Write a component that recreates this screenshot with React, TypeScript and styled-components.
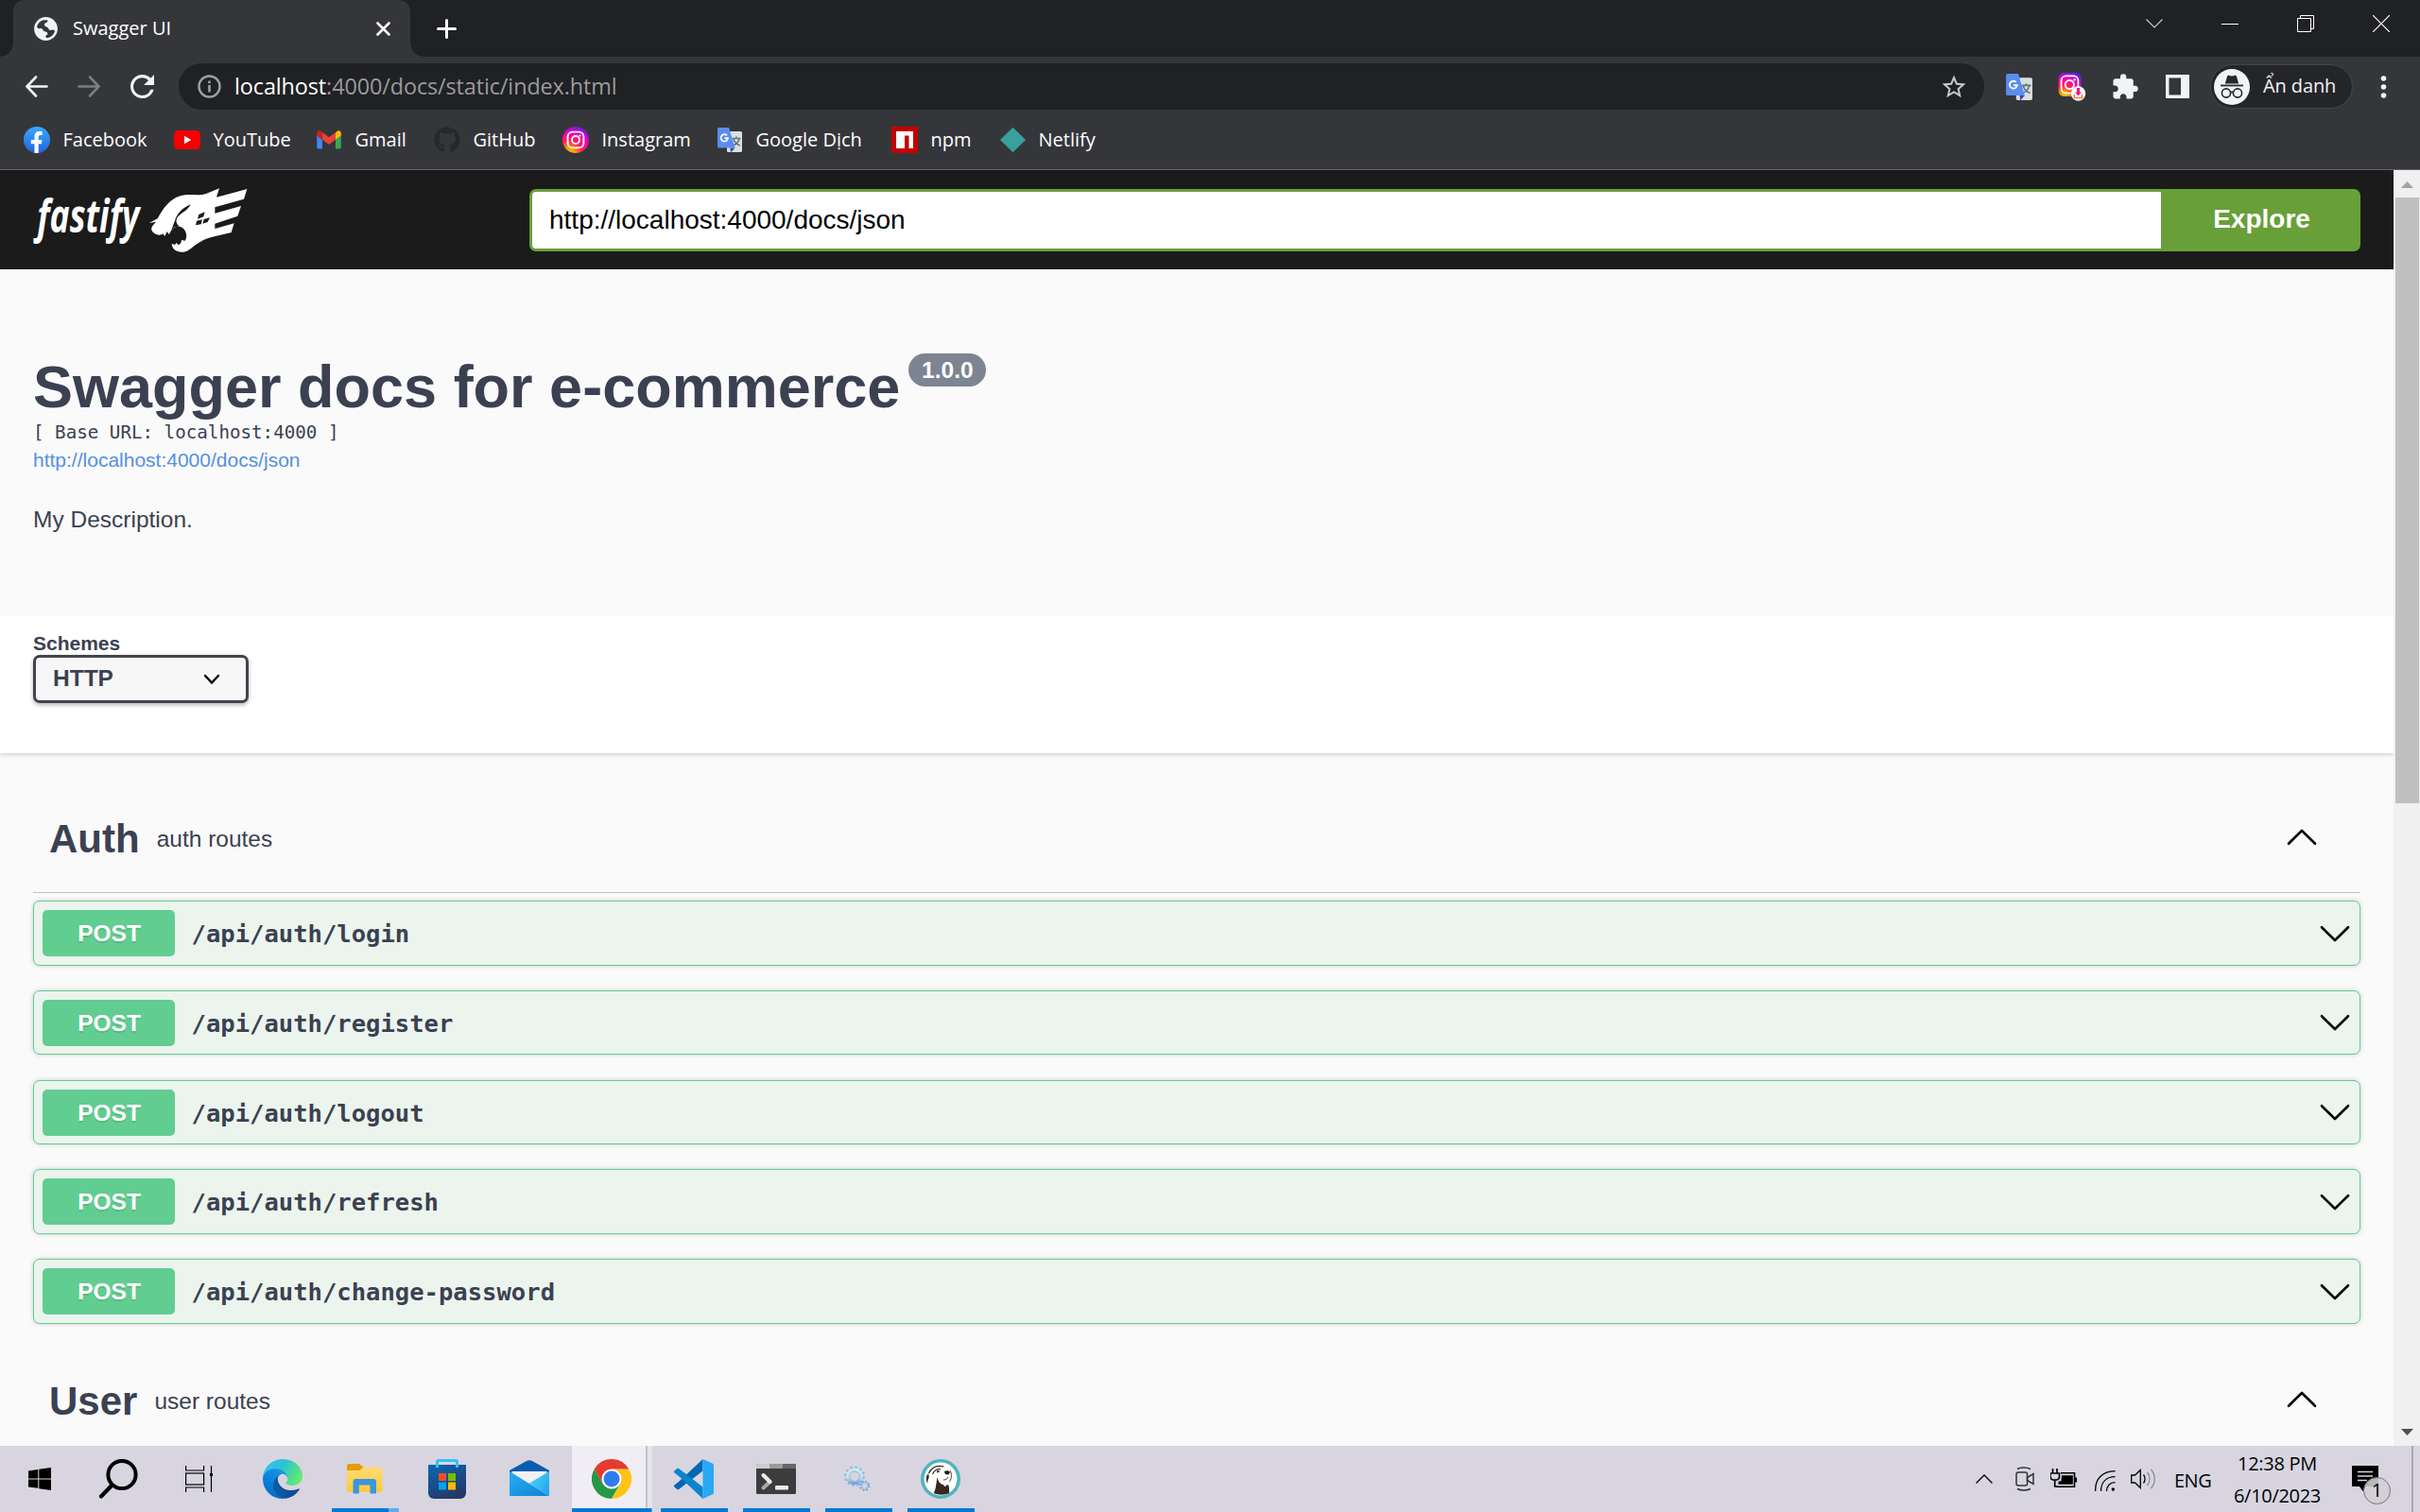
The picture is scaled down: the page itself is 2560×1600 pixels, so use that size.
import React from "react";
import styled, { createGlobalStyle } from "styled-components";
import { FaGithub } from "react-icons/fa";
import { MdExtension, MdStarBorder, MdRefresh } from "react-icons/md";

const GlobalStyle = createGlobalStyle`
  *, *::before, *::after { box-sizing: border-box; }
  html, body { margin: 0; padding: 0; }
  body { width: 2560px; height: 1600px; overflow: hidden; background: #fafafa; }
  svg { display: block; flex: none; }
`;

const UI = `"Open Sans", "Noto Sans", sans-serif`;
const SANS = `"Liberation Sans", Arial, sans-serif`;
const MONO = `"DejaVu Sans Mono", "Liberation Mono", monospace`;

const Screen = styled.div`
  width: 2560px;
  height: 1600px;
  display: flex;
  flex-direction: column;
  overflow: hidden;
`;

/* ---------- browser chrome ---------- */

const TabStrip = styled.div`
  height: 60px;
  flex: none;
  background: #202124;
  display: flex;
  padding-left: 14px;
`;

const Tab = styled.div`
  position: relative;
  width: 420px;
  height: 60px;
  background: #35363a;
  border-radius: 12px 12px 0 0;
  display: flex;
  align-items: center;
  padding: 0 21px 0 22px;
  &::before, &::after {
    content: "";
    position: absolute;
    bottom: 0;
    width: 14px;
    height: 14px;
  }
  &::before { left: -14px; background: radial-gradient(circle at 0 0, transparent 13.5px, #35363a 14px); }
  &::after { right: -14px; background: radial-gradient(circle at 100% 0, transparent 13.5px, #35363a 14px); }
`;

const TabTitle = styled.span`
  flex: 1;
  margin-left: 16px;
  padding-bottom: 0;
  font: 400 20px/28px ${UI};
  color: #fff;
`;

const NewTab = styled.div`
  margin-left: 28px;
  display: flex;
  align-items: center;
`;

const WindowControls = styled.div`
  margin-left: auto;
  margin-top: 16px;
  height: 19px;
  display: flex;
  gap: 62px;
  padding-right: 32px;
`;

const Toolbar = styled.div`
  height: 60px;
  flex: none;
  background: #35363a;
  display: flex;
  align-items: center;
  padding: 3px 29px 0 26px;
`;

const NavButtons = styled.div`
  display: flex;
  gap: 31px;
  width: 163px;
  margin-top: -1px;
  align-items: center;
`;

const Omnibox = styled.div`
  width: 1910px;
  height: 49px;
  border-radius: 25px;
  background: #202124;
  display: flex;
  align-items: center;
  padding: 0 17px 0 20px;
`;

const Url = styled.span`
  flex: 1;
  margin-left: 14px;
  padding-bottom: 2px;
  font: 400 23.4px/32px ${UI};
  letter-spacing: -0.1px;
  color: #9a9b9d;
  b { font-weight: 400; color: #fff; }
`;

const Extensions = styled.div`
  display: flex;
  align-items: center;
  gap: 26px;
  margin-left: 22px;
  width: 217px;
  svg:last-child { margin-left: 2px; }
`;

const Incognito = styled.div`
  width: 151px;
  height: 47px;
  margin-right: 28px;
  border: 1.5px solid #45464a;
  border-radius: 24px;
  background: #242529;
  display: flex;
  align-items: center;
  padding: 0 0 0 3px;
  font: 400 20px/28px ${UI};
  letter-spacing: -0.1px;
  color: #f1f3f4;
  span { margin-left: 14px; padding-bottom: 2px; white-space: nowrap; }
`;

const Bookmarks = styled.div`
  height: 60px;
  flex: none;
  background: #35363a;
  border-bottom: 1px solid #626366;
  display: flex;
  align-items: flex-start;
  padding: 14px 0 0 25px;
`;

const Bookmark = styled.div<{ $w: number }>`
  width: ${(p) => p.$w}px;
  height: 28px;
  display: flex;
  align-items: center;
  font: 400 20px/28px ${UI};
  color: #fff;
  white-space: nowrap;
  span { margin-left: 13.5px; }
`;

/* ---------- swagger page ---------- */

const Viewport = styled.div`
  height: 1350px;
  flex: none;
  display: flex;
  overflow: hidden;
`;

const Page = styled.main`
  width: 2532px;
  height: 1350px;
  overflow: hidden;
  background: #fafafa;
  color: #3b4151;
  font-family: ${SANS};
`;

const TopBar = styled.header`
  height: 105px;
  background: #1b1b1b;
  display: flex;
  align-items: flex-start;
  padding-left: 30px;
`;

const SearchForm = styled.div`
  display: flex;
  margin: 20px 0 0 290px;
  height: 66px;
`;

const SpecInput = styled.div`
  width: 1726px;
  border: 3px solid #689f38;
  border-right: 0;
  border-radius: 7px 0 0 7px;
  background: #fff;
  padding: 0 16px 1px 18px;
  font: 400 28px/60px ${SANS};
  color: #000;
`;

const ExploreButton = styled.div`
  width: 211px;
  border-radius: 0 7px 7px 0;
  background: #689f38;
  text-align: center;
  padding-left: 2px;
  font: 700 28px/63px ${SANS};
  color: #fff;
`;

const Info = styled.section`
  height: 366px;
  padding: 88px 35px 0;
`;

const TitleRow = styled.div`
  height: 72px;
  display: flex;
  align-items: flex-start;
`;

const Title = styled.h2`
  margin: 0;
  font: 700 63px/72px ${SANS};
  white-space: nowrap;
`;

const Version = styled.span`
  margin: 1px 0 0 9px;
  width: 82px;
  height: 35px;
  border-radius: 18px;
  background: #7d8492;
  color: #fff;
  font: 700 24.5px/35px ${SANS};
  text-align: center;
`;

const BaseUrl = styled.pre`
  margin: 0;
  font: 400 19.2px/26px ${MONO};
  height: 25px;
`;

const SpecLink = styled.a`
  display: block;
  font: 400 21px/33px ${SANS};
  color: #5590e0;
`;

const Description = styled.p`
  margin: 33px 0 0;
  font: 400 24.5px/28px ${SANS};
`;

const SchemeSection = styled.section`
  position: relative;
  height: 146px;
  background: #fff;
  box-shadow: 0 2px 4px rgba(0, 0, 0, 0.15);
  padding: 18px 35px 0;
`;

const SchemeLabel = styled.div`
  font: 700 21px/24px ${SANS};
`;

const Select = styled.div`
  width: 228px;
  height: 51px;
  border: 3px solid #41444e;
  border-radius: 7px;
  background: #f7f7f7;
  box-shadow: 0 2px 4px rgba(0, 0, 0, 0.3);
  display: flex;
  justify-content: space-between;
  align-items: center;
  padding: 0 27px 0 18px;
  font: 700 24.5px/43px ${SANS};
  span { padding-bottom: 2px; }
`;

const Tags = styled.section`
  padding: 33px 35px 0;
`;

const TagHeader = styled.div`
  height: 115px;
  border-bottom: 1px solid #c1c3c8;
  display: flex;
  align-items: center;
  padding: 2px 46px 0 17px;
  h3 { margin: 0; font: 700 42px/50px ${SANS}; }
  p { margin: 0 auto 0 18px; font: 400 24.5px/30px ${SANS}; }
  svg { margin-bottom: 4px; }
`;

const Operations = styled.div`
  display: flex;
  flex-direction: column;
  gap: 26.25px;
  padding: 8px 0 24.5px;
`;

const OpBlock = styled.div`
  height: 68.5px;
  border: 1px solid #61cd90;
  border-radius: 7px;
  background: #ebf5ee;
  box-shadow: 0 0 5px rgba(0, 0, 0, 0.19);
  display: flex;
  align-items: center;
  padding: 0.5px 10px 0 9px;
`;

const Method = styled.span`
  width: 140px;
  height: 49px;
  border-radius: 5px;
  background: #61cd90;
  color: #fff;
  text-align: center;
  text-shadow: 0 2px 0 rgba(0, 0, 0, 0.1);
  padding-left: 1px;
  font: 700 24.5px/49px ${SANS};
`;

const Path = styled.span`
  flex: 1;
  margin-left: 17.5px;
  padding-top: 1px;
  font: 700 25.55px/48px ${MONO};
`;

const Scrollbar = styled.div`
  width: 28px;
  background: #f0f0f0;
  display: flex;
  flex-direction: column;
  align-items: center;
  padding: 12px 0 11px;
`;

const Thumb = styled.div`
  width: 25px;
  height: 641px;
  margin: 10px 0 auto 1px;
  background: #c0c0c0;
`;

/* ---------- taskbar ---------- */

const Taskbar = styled.footer`
  height: 70px;
  flex: none;
  background: #d8d5e1;
  display: flex;
`;

const SystemButtons = styled.div`
  width: 264px;
  display: flex;
  align-items: flex-start;
  padding-left: 30px;
`;

const Spaced = styled.div<{ $l?: number; $t?: number }>`
  margin-left: ${(p) => p.$l ?? 0}px;
  margin-top: ${(p) => p.$t ?? 0}px;
`;

const AppSlot = styled.div<{ $running?: boolean; $active?: boolean; $stack?: boolean }>`
  width: ${(p) => (p.$active ? 85 : 71)}px;
  height: 70px;
  margin-right: ${(p) => (p.$active ? 9 : 16)}px;
  margin-left: ${(p) => (p.$active ? -7 : 0)}px;
  padding: 14px 0 0 ${(p) => (p.$active ? 21 : 14)}px;
  border-bottom: 4px solid ${(p) => (p.$running ? "#0078d7" : "transparent")};
  background: ${(p) =>
    p.$active
      ? "linear-gradient(90deg, #f0eef4 0 78px, #c4c1cb 78px 80px, #e5e3eb 80px)"
      : "transparent"};
  ${(p) =>
    p.$stack &&
    `border-image: linear-gradient(90deg, #0078d7 ${p.$active ? 94 : 80}%, #62acea ${p.$active ? 94 : 80}%) 4;`}
`;

const Tray = styled.div`
  margin-left: auto;
  display: flex;
  align-items: flex-start;
  font: 400 20px/34px ${UI};
  color: #000;
`;

const Lang = styled.span`
  margin: 20px 0 0 19px;
  width: 61px;
  letter-spacing: -0.5px;
`;

const Clock = styled.div`
  width: 96px;
  margin-top: 2px;
  text-align: center;
  letter-spacing: -0.3px;
  white-space: nowrap;
`;

const Notifications = styled.div`
  position: relative;
  margin: 21px 0 0 31px;
  width: 63px;
  height: 49px;
`;

const Count = styled.span`
  position: absolute;
  left: 12px;
  top: 12px;
  width: 29px;
  height: 29px;
  border: 1px solid #77757c;
  border-radius: 50%;
  background: rgba(208, 207, 210, 0.88);
  text-align: center;
  font: 400 20px/26px ${UI};
`;

const PeekEdge = styled.div`
  width: 9px;
  height: 70px;
  border-left: 2px solid #aaa8b4;
`;

/* ---------- icons ---------- */

const GlobeIcon = () => (
  <svg width="25" height="25" viewBox="0 0 25 25">
    <circle cx="12.5" cy="12.5" r="12.4" fill="#f1f3f4" />
    <path
      d="M3 10.2C4 6.500 7 3.800 10.500 3.200L14.200 3.300 14.300 5.300 11 7 11.200 9.200 14.600 11.300 16.500 14 20.800 13.500 22 15C20.800 19 17.500 21.800 13.500 22.200L12 20.300 14.500 18.300 13.800 16.200 9.800 14.600 8.300 12 4.600 12.300Z"
      fill="#35363a"
    />
  </svg>
);

const CloseTabIcon = () => (
  <svg width="15" height="15" viewBox="0 0 15 15">
    <path d="M1.500 1.500l12 12M13.500 1.500l-12 12" stroke="#fff" strokeWidth="2.6" strokeLinecap="round" />
  </svg>
);

const PlusIcon = () => (
  <svg width="21" height="21" viewBox="0 0 21 21">
    <path d="M10.500 1.500v18M1.500 10.500h18" stroke="#fff" strokeWidth="3" strokeLinecap="round" />
  </svg>
);

const ArrowIcon = ({ color, flip }: { color: string; flip?: boolean }) => (
  <svg width="25" height="25" viewBox="0 0 25 25" transform={flip ? "scale(-1 1)" : undefined}>
    <path d="M12 2.500L2.500 12.500 12 22.500M2.500 12.500h21" fill="none" stroke={color} strokeWidth="2.600" strokeLinecap="round" />
  </svg>
);

const InfoIcon = () => (
  <svg width="25" height="25" viewBox="0 0 25 25">
    <circle cx="12.500" cy="12.500" r="11" fill="none" stroke="#9aa0a6" strokeWidth="2.400" />
    <path d="M12.500 11v7.500M12.500 6.600v2.600" stroke="#9aa0a6" strokeWidth="2.600" />
  </svg>
);

const FacebookIcon = () => (
  <svg width="28" height="28" viewBox="0 0 28 28">
    <defs>
      <linearGradient id="fb" x1="0" y1="0" x2="0" y2="1">
        <stop offset="0" stopColor="#3aa9fb" />
        <stop offset="1" stopColor="#2263e2" />
      </linearGradient>
    </defs>
    <circle cx="14" cy="14" r="14" fill="url(#fb)" />
    <path
      d="M11.500 28V18.200H7.800v-4.200h3.700v-3c0-4.200 2-5.900 5.400-5.900 1.300 0 2 .1 2.700.2v3.800h-1.900c-1.500 0-2 .8-2 2.400V14h3.800l-.6 4.200h-3.200V28z"
      fill="#fff"
    />
  </svg>
);

const YouTubeIcon = () => (
  <svg width="28" height="28" viewBox="0 0 28 28">
    <rect y="4" width="28" height="20" rx="4.500" fill="#f60002" />
    <path d="M11 9.800v8.400L18.300 14z" fill="#fff" />
  </svg>
);

const GmailIcon = () => (
  <svg width="28" height="28" viewBox="0 0 28 28">
    <path d="M1.200 9.300l5.800 4.500V23.500H3a1.800 1.800 0 0 1-1.800-1.800z" fill="#4285f4" />
    <path d="M26.800 9.300L21 13.800V23.500h4a1.800 1.800 0 0 0 1.800-1.800z" fill="#34a853" />
    <path d="M21 6.500v7.300l5.800-4.400V7.200c0-2.700-2.600-3.600-4.500-2.200z" fill="#fbbc04" />
    <path d="M7 13.800V6l7 5.300L21 6v7.800l-7 5.300z" fill="#ea4335" />
    <path d="M1.200 7.200v2.200L7 13.800V6L5.700 5C3.800 3.600 1.200 4.600 1.200 7.200z" fill="#c5221f" />
  </svg>
);

const InstaGlyph = ({ id }: { id: string }) => (
  <defs>
    <radialGradient id={id} cx=".25" cy="1.050" r="1.150">
      <stop offset="0" stopColor="#ffd600" />
      <stop offset=".22" stopColor="#ff9a00" />
      <stop offset=".45" stopColor="#ff1f5a" />
      <stop offset=".7" stopColor="#f500b4" />
      <stop offset="1" stopColor="#5b1ff5" />
    </radialGradient>
  </defs>
);

const InstagramIcon = () => (
  <svg width="28" height="28" viewBox="0 0 28 28">
    <InstaGlyph id="ig1" />
    <circle cx="14" cy="14" r="14" fill="url(#ig1)" />
    <rect x="5.600" y="5.600" width="16.800" height="16.800" rx="5" fill="none" stroke="#fff" strokeWidth="1.900" />
    <circle cx="14" cy="14" r="4" fill="none" stroke="#fff" strokeWidth="1.800" />
    <circle cx="18.500" cy="9.500" r="1.100" fill="#fff" />
  </svg>
);

const InstaSaveIcon = () => (
  <svg width="30" height="30" viewBox="0 0 30 30">
    <InstaGlyph id="ig2" />
    <rect x=".5" width="24" height="25" rx="6" fill="url(#ig2)" />
    <rect x="3.600" y="3.300" width="17.800" height="18.300" rx="5" fill="none" stroke="#fff" strokeWidth="1.800" />
    <circle cx="12.300" cy="12.600" r="4.600" fill="none" stroke="#fff" strokeWidth="1.900" />
    <circle cx="17.600" cy="7.200" r="1.200" fill="#fff" />
    <circle cx="21.500" cy="22" r="7.700" fill="#fff" />
    <path d="M21.500 16v6" stroke="#e0148c" strokeWidth="3" />
    <path d="M17.800 20.500h7.400l-3.700 4z" fill="#f0257c" />
    <path d="M17.300 23v3.400h8.400V23" fill="none" stroke="#ff7a3c" strokeWidth="1.500" />
  </svg>
);

const TranslateIcon = ({ size }: { size: number }) => (
  <svg width={size} height={size} viewBox="0 0 28 28">
    <rect x="11" y="5" width="16" height="22" rx="1.500" fill="#dcdee0" />
    <path d="M16.500 12.500h9M21 10.500v2M18 13c.8 3 3.500 5.800 6.800 7M24 13c-.8 3.200-3.800 6-7 7.200" fill="none" stroke="#5f7680" strokeWidth="1.500" />
    <path d="M14.500 22.500h5l-4.500 5z" fill="#3349ab" />
    <path d="M2.500 1h10.600L19.500 22.500h-17A1.500 1.500 0 0 1 1 21V2.500A1.500 1.500 0 0 1 2.500 1z" fill="#5a8df0" />
    <path d="M11 9.300A3.700 3.700 0 1 0 12 12.200H8.500" fill="none" stroke="#fff" strokeWidth="1.700" />
  </svg>
);

const NpmIcon = () => (
  <svg width="28" height="28" viewBox="0 0 28 28">
    <path d="M0 0h28v28H0z" fill="#c40000" />
    <path d="M5 5h18v18h-4.500V9.500H14V23H5z" fill="#fff" />
  </svg>
);

const NetlifyIcon = () => (
  <svg width="28" height="28" viewBox="0 0 28 28">
    <path d="M14.500 .8L28 14 14.500 27.200 1 14z" fill="#38a09d" />
  </svg>
);

const SidePanelIcon = () => (
  <svg width="25" height="25" viewBox="0 0 25 25">
    <path d="M0 0h25v25H0zM3.500 3.500v18H16v-18z" fill="#f1f3f4" fillRule="evenodd" />
  </svg>
);

const IncognitoIcon = () => (
  <svg width="38" height="38" viewBox="0 0 38 38">
    <circle cx="19" cy="19" r="19" fill="#f1f3f4" />
    <path d="M11.800 15.500L14 8c.4-1.200 1.300-1.300 2.300-1l2.700.6 2.700-.6c1-.3 1.900-.2 2.300 1l2.200 7.500z" fill="#27282c" />
    <path d="M7 17.500h24" stroke="#27282c" strokeWidth="1.800" />
    <g fill="none" stroke="#27282c" strokeWidth="1.600">
      <circle cx="13" cy="25.500" r="4.600" />
      <circle cx="25" cy="25.500" r="4.600" />
      <path d="M17.500 24.800c1-.6 2-.6 3 0" />
    </g>
  </svg>
);

const MenuDots = () => (
  <svg width="10" height="28" viewBox="0 0 10 28">
    {[5, 14, 23].map((y) => (
      <circle key={y} cx="4.500" cy={y} r="2.800" fill="#f1f3f4" />
    ))}
  </svg>
);

const FastifyLogo = () => (
  <svg width="240" height="85" viewBox="0 0 720 255">
    <text
      x="28"
      y="167"
      textLength="324"
      lengthAdjust="spacingAndGlyphs"
      fontFamily="Open Sans, Noto Sans, sans-serif"
      fontWeight="700"
      fontStyle="italic"
      fontSize="146"
      fill="#fff"
    >
      fastify
    </text>
    <path
      fill="#fff"
      d="M383 138L410 124C428 92 448 62 482 52C510 43 540 54 566 44L606 28L597 56L694 30L684 62L592 88V107L675 84L664 116L592 140V156L653 139L644 168L590 181C566 186 545 196 524 212C508 226 498 231 484 230C466 228 456 219 455 204L465 207L470 201L477 208L484 202L486 192L498 194C505 180 502 162 488 152C474 146 460 150 453 163L446 174L440 165L433 180L427 172C414 182 398 172 392 162C388 154 392 148 405 134Z"
    />
    <path fill="#1b1b1b" d="M515 79C490 90 476 104 468 122L454 160C462 148 474 148 480 150C468 138 466 128 476 116C490 104 505 98 515 79Z" />
    <path fill="#1b1b1b" d="M541 111L560 103L556 118L537 125ZM534 131L552 127L548 142L531 145ZM557 126L576 121L569 135L553 140Z" />
  </svg>
);

const Chevron = ({ up }: { up?: boolean }) => (
  <svg width="32" height="18" viewBox="0 0 32 18" transform={up ? "scale(1 -1)" : undefined}>
    <path d="M2 2.200L16 16 30 2.200" fill="none" stroke="#000" strokeWidth="2.600" strokeLinecap="round" strokeLinejoin="round" />
  </svg>
);

const SelectArrow = () => (
  <svg width="18" height="12" viewBox="0 0 18 12">
    <path d="M2 2l7 7.500L16 2" fill="none" stroke="#000" strokeWidth="2.400" strokeLinecap="round" />
  </svg>
);

const ScrollArrow = ({ down }: { down?: boolean }) => (
  <svg width="13" height="7" viewBox="0 0 13 7">
    {down ? <path d="M0 0h13L6.500 7z" fill="#505050" /> : <path d="M0 7h13L6.500 0z" fill="#a3a3a3" />}
  </svg>
);

const StartIcon = () => (
  <svg width="24" height="24" viewBox="0 0 24 24">
    <path d="M0 3.500L10.300 2V11.400H0zM11.300 1.800L24 0v11.400H11.300zM0 12.500h10.300v9.300L0 20.500zM11.300 12.500H24V24l-12.700-1.800z" fill="#000" />
  </svg>
);

const SearchIcon = () => (
  <svg width="42" height="42" viewBox="0 0 42 42">
    <circle cx="25" cy="16.500" r="14.600" fill="none" stroke="#000" strokeWidth="4" />
    <path d="M14.500 27.500L3 39.500" stroke="#000" strokeWidth="4.200" strokeLinecap="round" />
  </svg>
);

const TaskViewIcon = () => (
  <svg width="30" height="28" viewBox="0 0 30 28">
    <g fill="none" stroke="#000" strokeWidth="1.200">
      <path d="M.6 0v5h19V0M.6 28v-5h19v5" />
      <rect x=".6" y="8" width="19" height="12" />
      <path d="M27.500 0v28" />
    </g>
    <path d="M26 8h3v3h-3z" />
  </svg>
);

const EdgeIcon = () => (
  <svg width="42" height="42" viewBox="0 0 256 256">
    <defs>
      <linearGradient id="e1" x1=".2" y1=".7" x2="1" y2=".7">
        <stop offset="0" stopColor="#0c59a4" />
        <stop offset="1" stopColor="#114a8b" />
      </linearGradient>
      <linearGradient id="e2" x1=".8" y1="0" x2=".2" y2="1">
        <stop offset="0" stopColor="#1b9de2" />
        <stop offset=".5" stopColor="#0b84dd" />
        <stop offset="1" stopColor="#0067c0" />
      </linearGradient>
      <linearGradient id="e3" x1="0" y1=".2" x2="1" y2=".6">
        <stop offset="0" stopColor="#35c1f1" />
        <stop offset=".45" stopColor="#2bc3d2" />
        <stop offset="1" stopColor="#66eb6e" />
      </linearGradient>
    </defs>
    <path
      transform="translate(-4.630 -4.920)"
      fill="url(#e1)"
      d="M235.680 195.460a93.730 93.730 0 0 1-10.540 4.710 101.870 101.870 0 0 1-35.900 6.460c-47.320 0-88.540-32.550-88.540-74.320A31.480 31.480 0 0 1 117.130 105c-42.800 1.800-53.800 46.400-53.800 72.530 0 73.880 68.090 81.370 82.760 81.370 7.910 0 19.840-2.300 27-4.560l1.310-.44a128.340 128.340 0 0 0 66.600-52.800 4 4 0 0 0-5.320-5.640z"
    />
    <path
      fill="url(#e2)"
      d="M105.730 241.420a79.200 79.200 0 0 1-22.740-21.340 80.720 80.720 0 0 1 29.530-120c3.130-1.470 8.450-4.050 15.540-4A32.350 32.350 0 0 1 153.660 109a31.880 31.880 0 0 1 6.360 18.660c0-.21 24.460-79.600-80-79.600-43.900 0-80 41.660-80 78.210a130.150 130.150 0 0 0 12.110 56 128 128 0 0 0 156.380 67.110 75.550 75.550 0 0 1-62.780-8z"
    />
    <path
      fill="url(#e3)"
      d="M152.330 148.860c-.81 1.050-3.300 2.500-3.300 5.660 0 2.610 1.700 5.120 4.720 7.230 14.380 10 41.490 8.680 41.560 8.680A59.560 59.560 0 0 0 225.630 162.120 61.430 61.430 0 0 0 256 109.180c.26-22.410-8-37.310-11.340-43.910C223.460 23.840 177.720 0 128 0 57.100 0 0 56.800 0 128c.48-36.540 36.800-66.050 80-66.050 3.500 0 23.460.34 42 10.070 16.340 8.580 24.900 18.940 30.850 29.210 6.180 10.670 7.280 24.150 7.280 29.520s-2.740 13.330-7.800 18.110z"
    />
  </svg>
);

const FolderIcon = () => (
  <svg width="42" height="42" viewBox="0 0 42 42">
    <defs>
      <linearGradient id="fo" x1="0" y1="0" x2="0" y2="1">
        <stop offset="0" stopColor="#ffdc74" />
        <stop offset="1" stopColor="#fdca3c" />
      </linearGradient>
    </defs>
    <path d="M2 7a2 2 0 0 1 2-2h11l4 3.500V14H2z" fill="#e29c05" />
    <path d="M2 12h13.500l4-3.500H38a1.500 1.500 0 0 1 1.500 1.500v23.500a1.500 1.500 0 0 1-1.500 1.500H3.500A1.500 1.500 0 0 1 2 33.500z" fill="url(#fo)" />
    <path d="M8.500 36.500V24a3 3 0 0 1 3-3H30a3 3 0 0 1 3 3v12.500h-6.500V27.500H14.800v9z" fill="#3a96df" />
  </svg>
);

const StoreIcon = () => (
  <svg width="42" height="42" viewBox="0 0 42 42">
    <defs>
      <linearGradient id="st" x1="0" y1="0" x2=".5" y2="1">
        <stop offset="0" stopColor="#0b67b6" />
        <stop offset="1" stopColor="#243a66" />
      </linearGradient>
    </defs>
    <path d="M1 6h40v30a6 6 0 0 1-6 6H7a6 6 0 0 1-6-6z" fill="url(#st)" />
    <path d="M10.500 9V3a1.500 1.500 0 0 1 1.500-1.500h18A1.500 1.500 0 0 1 31.500 3v6" fill="none" stroke="#35c1f8" strokeWidth="3" />
    <path d="M12 15h8v8h-8z" fill="#f25022" />
    <path d="M22 15h8v8h-8z" fill="#7fba00" />
    <path d="M12 24.500h8v8h-8z" fill="#00a4ef" />
    <path d="M22 24.500h8v8h-8z" fill="#ffb900" />
  </svg>
);

const MailIcon = () => (
  <svg width="42" height="42" viewBox="0 0 42 42">
    <defs>
      <linearGradient id="ma" x1="0" y1="0" x2="1" y2="1">
        <stop offset="0" stopColor="#28b0f0" />
        <stop offset="1" stopColor="#0f80d8" />
      </linearGradient>
      <linearGradient id="mr" x1="0" y1=".2" x2="1" y2="1">
        <stop offset="0" stopColor="#48d6fb" />
        <stop offset="1" stopColor="#20a0ea" />
      </linearGradient>
    </defs>
    <path d="M0 12L18 2a6 6 0 0 1 6 0L42 12v4L21 25 0 16z" fill="#0a5cad" />
    <path d="M2.500 13h37v4L21 29 2.500 17z" fill="#f1f1f3" />
    <path d="M0 13l21 13L42 39H0z" fill="url(#ma)" />
    <path d="M42 13v26L21 25.500z" fill="url(#mr)" />
  </svg>
);

const ChromeIcon = () => (
  <svg width="42" height="42" viewBox="0 0 42 42">
    <path d="M2.810 10.500A21 21 0 0 0 21 42L30.100 26.200 21 21 11.900 26.200z" fill="#279847" />
    <path d="M39.190 10.500A21 21 0 0 1 21 42L30.100 26.200 21 10.500z" fill="#fcc417" />
    <path d="M2.810 10.500A21 21 0 0 1 39.190 10.500H21L11.900 26.200z" fill="#e33b2e" />
    <circle cx="21" cy="21" r="10.500" fill="#fff" />
    <circle cx="21" cy="21" r="8.500" fill="#2d7df0" />
  </svg>
);

const VsCodeIcon = () => (
  <svg width="42" height="42" viewBox="0 0 42 42">
    <path d="M30.500 0L5.500 23.500 2.200 26 .4 27.500a1.400 1.400 0 0 0 0 2l2.500 2.300a1.700 1.700 0 0 0 2.200.1L30.500 12.500z" fill="#0068b3" />
    <path d="M30.500 42L5.500 18.500 .4 14.500a1.400 1.400 0 0 1 0-2l2.500-2.300a1.700 1.700 0 0 1 2.200-.1L30.500 29.500z" fill="#0a84cf" />
    <path d="M30.500 0L40.500 4.500A2.500 2.500 0 0 1 42 6.800V35.200a2.500 2.500 0 0 1-1.500 2.300L30.500 42z" fill="#29a8f4" />
  </svg>
);

const TerminalIcon = () => (
  <svg width="42" height="42" viewBox="0 0 42 42">
    <rect y="5" width="42" height="32" rx="1.500" fill="#3c3c3c" />
    <path d="M0 10V6.500A1.500 1.500 0 0 1 1.500 5H14v5z" fill="#ccc" />
    <path d="M14 5h14v5H14z" fill="#9a9a9a" />
    <path d="M28 5h12.500A1.500 1.500 0 0 1 42 6.500V10H28z" fill="#676767" />
    <path d="M14.500 24L7.500 30.500" stroke="#a8a8a8" strokeWidth="4" strokeLinecap="round" />
    <path d="M7.500 17l7 7" stroke="#ececec" strokeWidth="4" strokeLinecap="round" />
    <rect x="20" y="28" width="14" height="4.500" rx="1" fill="#ececec" />
  </svg>
);

const GearsIcon = () => (
  <svg width="42" height="42" viewBox="0 0 42 42">
    <defs>
      <linearGradient id="ge" x1="0" y1="0" x2="0" y2="1">
        <stop offset="0" stopColor="#c8e8f2" />
        <stop offset=".6" stopColor="#c2e2f5" />
        <stop offset="1" stopColor="#6fa4e0" />
      </linearGradient>
    </defs>
    <circle cx="17" cy="18.300" r="9.700" fill="none" stroke="#8fb6d0" strokeWidth="2.200" strokeDasharray="2.600 2.480" />
    <circle cx="17" cy="18.300" r="7.200" fill="none" stroke="url(#ge)" strokeWidth="3.600" />
    <circle cx="17" cy="18.300" r="5.300" fill="none" stroke="#8ba9be" strokeWidth=".8" />
    <circle cx="27.700" cy="28.300" r="4.500" fill="none" stroke="#6e93b8" strokeWidth="1.800" strokeDasharray="2 1.530" />
    <circle cx="27.700" cy="28.300" r="3.200" fill="none" stroke="#9cc4ec" strokeWidth="1.600" />
  </svg>
);

const BeaverIcon = () => (
  <svg width="42" height="42" viewBox="0 0 42 42">
    <circle cx="21" cy="21" r="19.200" fill="#fff" stroke="#50b4bc" strokeWidth="3.600" />
    <path d="M17.700 19.300C18.500 23.500 20.500 26.500 24 27.200L29.500 27.500C30 30 30.300 33 30 36 25 38.300 18.500 38.300 13.800 36 15.500 32.500 15.800 30.500 16.200 27.500 16.500 24.500 17 22 17.700 19.300z" fill="#38261f" />
    <path d="M25 13c1.500-1.200 4.500-1 5.700.5.500 1.500-.8 3-2.700 3S25 14.800 25 13z" fill="#2b1d18" />
    <path d="M7.300 26C5 22 5.500 17 8.500 15 7.500 17 9.500 18 8.500 20 7.300 22 7.200 24 7.300 26z" fill="#38261f" />
    <path d="M8.500 15C11 9 17 6 24.500 8M12.500 16C14 12 18 9.500 21 11" fill="none" stroke="#38261f" strokeWidth="1.200" />
    <path d="M17 13.500l2.600-.6" fill="none" stroke="#38261f" strokeWidth="1.800" />
    <path d="M31 12C33 15.500 33 20 30.500 24M24 22c2 0 4-1 5-3" fill="none" stroke="#38261f" strokeWidth=".9" />
    <path d="M24.500 25.500l2.500.5-.3 3-2-.3z" fill="#fff" />
  </svg>
);

const TrayChevron = () => (
  <svg width="18" height="10" viewBox="0 0 18 10">
    <path d="M.5 9.500L9 1l8.500 8.500" fill="none" stroke="#000" strokeWidth="1.300" />
  </svg>
);

const MeetIcon = () => (
  <svg width="20" height="26" viewBox="0 0 20 26">
    <g fill="none" stroke="#333" strokeWidth="1.500">
      <rect x="1" y="6" width="11.500" height="14" rx="2" />
      <path d="M12.500 11.500L19 7.500v11l-6.500-4zM2 2.500C5.500.5 12 .5 16 2.500M2 23.500c3.500 2 10 2 14 0" />
    </g>
  </svg>
);

const BatteryIcon = () => (
  <svg width="28" height="21" viewBox="0 0 28 21">
    <path d="M2.500 0v5M7 0v5M0 5h9.500v3.500c0 2-1.500 3.500-3 3.500H3C1.500 12 0 10.500 0 8.500zM4.700 12v7h2.500" fill="none" stroke="#000" strokeWidth="1.700" />
    <path d="M11 4.700h14.500v14.500H6.500" fill="none" stroke="#000" strokeWidth="1.600" />
    <path d="M12 7.200h11.800v9.500H8.500V13.500h2.800zM26 9.500h2v5h-2z" />
  </svg>
);

const WifiIcon = () => (
  <svg width="22" height="22" viewBox="0 0 22 22">
    <g fill="none" stroke="#000" strokeWidth="1.300">
      <path d="M.7 22C0 9 8 .8 21.500 .7" />
      <path d="M6.500 22C6.500 12.500 12 7 21.500 6.700" />
      <path d="M12.500 22c0-5.500 3.500-9.300 9-9.300" />
    </g>
    <circle cx="19.300" cy="20" r="1.700" />
  </svg>
);

const VolumeIcon = () => (
  <svg width="27" height="22" viewBox="0 0 27 22">
    <path d="M.7 7h3.800L10.300 1.500v19L4.500 15H.7z" fill="none" stroke="#000" strokeWidth="1.300" />
    <path d="M13.500 6.500c2 2.500 2 6.500 0 9" fill="none" stroke="#000" strokeWidth="1.300" />
    <path d="M17.500 4c3.300 4 3.300 10 0 14M21.500 1c5 6 5 14 0 20" fill="none" stroke="#8c8a93" strokeWidth="1.300" />
  </svg>
);

const MessageIcon = () => (
  <svg width="28" height="28" viewBox="0 0 28 28">
    <path d="M0 0h28v22H15l-3.500 5L8 22H0z" />
    <path d="M6 6.500h16M6 11h16M6 15.500h10" stroke="#d8d5e1" strokeWidth="1.300" />
  </svg>
);

/* ---------- content ---------- */

const bookmarks = [
  { label: "Facebook", width: 159, icon: <FacebookIcon /> },
  { label: "YouTube", width: 150, icon: <YouTubeIcon /> },
  { label: "Gmail", width: 125, icon: <GmailIcon /> },
  { label: "GitHub", width: 136, icon: <FaGithub size={28} color="#24292e" /> },
  { label: "Instagram", width: 163, icon: <InstagramIcon /> },
  { label: "Google Dịch", width: 185, icon: <TranslateIcon size={28} /> },
  { label: "npm", width: 114, icon: <NpmIcon /> },
  { label: "Netlify", width: 120, icon: <NetlifyIcon /> },
];

const authRoutes = [
  "/api/auth/login",
  "/api/auth/register",
  "/api/auth/logout",
  "/api/auth/refresh",
  "/api/auth/change-password",
];

const Tag = ({ name, note }: { name: string; note: string }) => (
  <TagHeader>
    <h3>{name}</h3>
    <p>{note}</p>
    <Chevron up />
  </TagHeader>
);

export default function App() {
  return (
    <Screen>
      <GlobalStyle />
      <TabStrip>
        <Tab>
          <GlobeIcon />
          <TabTitle>Swagger UI</TabTitle>
          <CloseTabIcon />
        </Tab>
        <NewTab>
          <PlusIcon />
        </NewTab>
        <WindowControls>
          <svg width="18" height="18" viewBox="0 0 18 18">
            <path d="M.5 4.500L9 13l8.500-8.500" fill="none" stroke="#c8c9ca" strokeWidth="1.200" />
          </svg>
          <svg width="18" height="18" viewBox="0 0 18 18">
            <path d="M0 9.500h18" stroke="#fff" />
          </svg>
          <svg width="18" height="18" viewBox="0 0 18 18">
            <path d="M.5 3.500h14v14H.5zM3.500 3.500v-3h14v14h-3" fill="none" stroke="#fff" />
          </svg>
          <svg width="18" height="18" viewBox="0 0 18 18">
            <path d="M0 0l18 18M18 0L0 18" stroke="#fff" strokeWidth="1.200" />
          </svg>
        </WindowControls>
      </TabStrip>

      <Toolbar>
        <NavButtons>
          <ArrowIcon color="#f1f3f4" />
          <ArrowIcon color="#7d7e82" flip />
          <svg width="25" height="25" viewBox="4 4 16 16">
            <MdRefresh size={24} color="#f1f3f4" />
          </svg>
        </NavButtons>
        <Omnibox>
          <InfoIcon />
          <Url>
            <b>localhost</b>:4000/docs/static/index.html
          </Url>
          <MdStarBorder size={30} color="#c6c7c9" />
        </Omnibox>
        <Extensions>
          <TranslateIcon size={30} />
          <InstaSaveIcon />
          <MdExtension size={30} color="#f1f3f4" />
          <SidePanelIcon />
        </Extensions>
        <Incognito>
          <IncognitoIcon />
          <span>Ẩn danh</span>
        </Incognito>
        <MenuDots />
      </Toolbar>

      <Bookmarks>
        {bookmarks.map((b) => (
          <Bookmark key={b.label} $w={b.width}>
            {b.icon}
            <span>{b.label}</span>
          </Bookmark>
        ))}
      </Bookmarks>

      <Viewport>
        <Page>
          <TopBar>
            <Spaced $t={10}>
              <FastifyLogo />
            </Spaced>
            <SearchForm>
              <SpecInput>http://localhost:4000/docs/json</SpecInput>
              <ExploreButton>Explore</ExploreButton>
            </SearchForm>
          </TopBar>
          <Info>
            <TitleRow>
              <Title>Swagger docs for e-commerce</Title>
              <Version>1.0.0</Version>
            </TitleRow>
            <BaseUrl>[ Base URL: localhost:4000 ]</BaseUrl>
            <SpecLink>http://localhost:4000/docs/json</SpecLink>
            <Description>My Description.</Description>
          </Info>
          <SchemeSection>
            <SchemeLabel>Schemes</SchemeLabel>
            <Select>
              <span>HTTP</span>
              <SelectArrow />
            </Select>
          </SchemeSection>
          <Tags>
            <Tag name="Auth" note="auth routes" />
            <Operations>
              {authRoutes.map((route) => (
                <OpBlock key={route}>
                  <Method>POST</Method>
                  <Path>{route}</Path>
                  <Chevron />
                </OpBlock>
              ))}
            </Operations>
            <Tag name="User" note="user routes" />
          </Tags>
        </Page>
        <Scrollbar>
          <ScrollArrow />
          <Thumb />
          <ScrollArrow down />
        </Scrollbar>
      </Viewport>

      <Taskbar>
        <SystemButtons>
          <Spaced $t={23}><StartIcon /></Spaced>
          <Spaced $l={50} $t={14}><SearchIcon /></Spaced>
          <Spaced $l={50} $t={21}><TaskViewIcon /></Spaced>
        </SystemButtons>
        <AppSlot><EdgeIcon /></AppSlot>
        <AppSlot $running $stack><FolderIcon /></AppSlot>
        <AppSlot><StoreIcon /></AppSlot>
        <AppSlot><MailIcon /></AppSlot>
        <AppSlot $running $active $stack><ChromeIcon /></AppSlot>
        <AppSlot $running><VsCodeIcon /></AppSlot>
        <AppSlot $running><TerminalIcon /></AppSlot>
        <AppSlot $running><GearsIcon /></AppSlot>
        <AppSlot $running><BeaverIcon /></AppSlot>
        <Tray>
          <Spaced $t={30}><TrayChevron /></Spaced>
          <Spaced $l={24} $t={22}><MeetIcon /></Spaced>
          <Spaced $l={17} $t={24}><BatteryIcon /></Spaced>
          <Spaced $l={19} $t={26}><WifiIcon /></Spaced>
          <Spaced $l={16} $t={24}><VolumeIcon /></Spaced>
          <Lang>ENG</Lang>
          <Clock>
            <div>12:38 PM</div>
            <div>6/10/2023</div>
          </Clock>
          <Notifications>
            <MessageIcon />
            <Count>1</Count>
          </Notifications>
          <PeekEdge />
        </Tray>
      </Taskbar>
    </Screen>
  );
}
